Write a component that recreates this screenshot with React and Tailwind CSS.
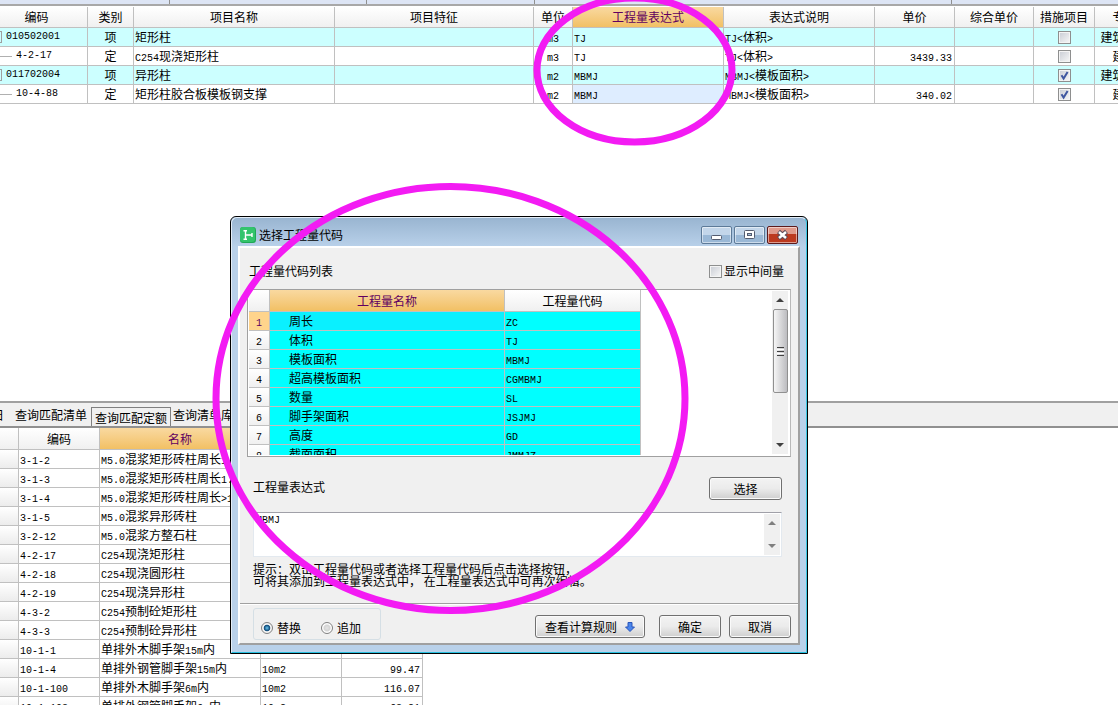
import { useState } from 'react';

const FONT = "font-['Noto_Sans_CJK_SC',sans-serif]";
const MONO = "font-['Liberation_Mono','Noto_Sans_CJK_SC',monospace]";

const HEAD = 'bg-linear-to-b from-white to-[#f0f0f0]';
const HEAD_ACTIVE = 'bg-linear-to-b from-[#f9d9a0] to-[#f2c063] text-[#600060]';
const CELL = 'h-[19px] border-r border-b border-[#c0c0c0] p-0 leading-4 whitespace-nowrap overflow-hidden';
const HCELL = 'border-r border-b border-[#c0c0c0] p-0 leading-4 font-normal whitespace-nowrap overflow-hidden';

const ITEM_COLS = [
  { title: '编码', width: 'w-[88px]' },
  { title: '类别', width: 'w-[46px]' },
  { title: '项目名称', width: 'w-[201px]' },
  { title: '项目特征', width: 'w-[199px]' },
  { title: '单位', width: 'w-[39px]' },
  { title: '工程量表达式', width: 'w-[151px]', active: true },
  { title: '表达式说明', width: 'w-[151px]' },
  { title: '单价', width: 'w-[80px]' },
  { title: '综合单价', width: 'w-[79px]' },
  { title: '措施项目', width: 'w-[61px]' },
  { title: '专业', width: 'w-[60px]' },
];

const ITEMS = [
  { code: '010502001', kind: '项', name: '矩形柱', unit: 'm3', expr: 'TJ', note: 'TJ<体积>', price: '', measure: false, major: '建筑工程' },
  { code: '4-2-17', kind: '定', name: 'C254现浇矩形柱', unit: 'm3', expr: 'TJ', note: 'TJ<体积>', price: '3439.33', measure: false, major: '建筑' },
  { code: '011702004', kind: '项', name: '异形柱', unit: 'm2', expr: 'MBMJ', note: 'MBMJ<模板面积>', price: '', measure: true, major: '建筑工程' },
  { code: '10-4-88', kind: '定', name: '矩形柱胶合板模板钢支撑', unit: 'm2', expr: 'MBMJ', note: 'MBMJ<模板面积>', price: '340.02', measure: true, major: '建筑', selected: true },
];

const QUOTAS = [
  ['3-1-2', 'M5.0混浆矩形砖柱周长1.2m内', '10m3', ''],
  ['3-1-3', 'M5.0混浆矩形砖柱周长1.8m内', '10m3', ''],
  ['3-1-4', 'M5.0混浆矩形砖柱周长>1.8m', '10m3', ''],
  ['3-1-5', 'M5.0混浆异形砖柱', '10m3', ''],
  ['3-2-12', 'M5.0混浆方整石柱', '10m3', ''],
  ['4-2-17', 'C254现浇矩形柱', '10m3', ''],
  ['4-2-18', 'C254现浇圆形柱', '10m3', ''],
  ['4-2-19', 'C254现浇异形柱', '10m3', ''],
  ['4-3-2', 'C254预制砼矩形柱', '10m3', ''],
  ['4-3-3', 'C254预制砼异形柱', '10m3', ''],
  ['10-1-1', '单排外木脚手架15m内', '', ''],
  ['10-1-4', '单排外钢管脚手架15m内', '10m2', '99.47'],
  ['10-1-100', '单排外木脚手架6m内', '10m2', '116.07'],
  ['10-1-103', '单排外钢管脚手架6m内', '10m2', '63.81'],
];

const CODES = [
  ['周长', 'ZC'],
  ['体积', 'TJ'],
  ['模板面积', 'MBMJ'],
  ['超高模板面积', 'CGMBMJ'],
  ['数量', 'SL'],
  ['脚手架面积', 'JSJMJ'],
  ['高度', 'GD'],
  ['截面面积', 'JMMJZ'],
];

// Latin runs go in the half-width mono face, two of them per Chinese glyph
function Mixed({ text }) {
  return text.split(/([\x20-\x7e]+)/).filter(Boolean).map((run, i) =>
    /^[\x20-\x7e]/.test(run)
      ? <span key={i} className={`${MONO} text-[10px] leading-none`}>{run}</span>
      : <span key={i}>{run}</span>
  );
}

function Check({ id, label, defaultChecked = false }) {
  return (
    <span className="inline-grid shrink-0">
      <input
        id={id}
        type="checkbox"
        aria-label={label}
        defaultChecked={defaultChecked}
        className="peer col-start-1 row-start-1 m-0 size-[13px] appearance-none border border-[#8e8f8f] bg-linear-to-br from-[#c8ccd4] to-[#f8f8f8] shadow-[inset_0_0_0_1px_#f4f4f4]"
      />
      <svg viewBox="0 0 13 13" className="pointer-events-none invisible col-start-1 row-start-1 size-[13px] peer-checked:visible">
        <path d="M3.5 6.2 L5.6 9.6 L9.6 3" fill="none" stroke="#3f57a0" strokeWidth="2" />
      </svg>
    </span>
  );
}

function ItemTable() {
  return (
    <table className="w-[1155px] table-fixed border-separate border-spacing-0">
      <thead>
        <tr>
          {ITEM_COLS.map((col, i) => (
            <th key={col.title} className={`${HCELL} h-[21px] ${col.width} ${i === 0 ? 'pr-[14px]' : ''} ${col.active ? HEAD_ACTIVE : HEAD}`}>
              {col.title}
            </th>
          ))}
        </tr>
      </thead>
      <tbody>
        {ITEMS.map((item) => {
          const parent = item.kind === '项';
          return (
            <tr key={item.code} className={parent ? 'bg-[#ccffff]' : 'bg-white'}>
              <td className={CELL}>
                <div className="flex items-center">
                  {parent
                    ? <span className="mr-1 h-3 w-[2px] border border-l-0 border-[#a0a0a0]" />
                    : <span className="mr-1 h-px w-3 bg-[#b0b0b0]" />}
                  <Mixed text={item.code} />
                </div>
              </td>
              <td className={`${CELL} text-center`}>{item.kind}</td>
              <td className={`${CELL} pl-px`}><Mixed text={item.name} /></td>
              <td className={CELL} />
              <td className={`${CELL} text-center`}><Mixed text={item.unit} /></td>
              <td className={`${CELL} pl-px ${item.selected ? 'bg-[#deedff]' : ''}`}><Mixed text={item.expr} /></td>
              <td className={`${CELL} pl-px`}><Mixed text={item.note} /></td>
              <td className={`${CELL} pr-[2px] text-right`}><Mixed text={item.price} /></td>
              <td className={CELL} />
              <td className={CELL}>
                <div className="flex justify-center">
                  <Check id={`measure-${item.code}`} label={`措施项目 ${item.code}`} defaultChecked={item.measure} />
                </div>
              </td>
              <td className={`${CELL} text-center`}>{item.major}</td>
            </tr>
          );
        })}
      </tbody>
    </table>
  );
}

function QuotaTable() {
  return (
    <table className="w-[423px] table-fixed border-separate border-spacing-0">
      <thead>
        <tr>
          <th className={`${HCELL} h-[22px] w-[19px] ${HEAD}`} />
          <th className={`${HCELL} w-[81px] ${HEAD}`}>编码</th>
          <th className={`${HCELL} w-[161px] ${HEAD_ACTIVE}`}>名称</th>
          <th className={`${HCELL} w-[81px] ${HEAD}`}>单位</th>
          <th className={`${HCELL} w-[81px] ${HEAD}`}>单价</th>
        </tr>
      </thead>
      <tbody>
        {QUOTAS.map(([code, name, unit, price]) => (
          <tr key={code}>
            <td className={`${CELL} bg-linear-to-b from-white to-[#ececec]`} />
            <td className={`${CELL} pl-px`}><Mixed text={code} /></td>
            <td className={`${CELL} pl-px`}><Mixed text={name} /></td>
            <td className={`${CELL} pl-px`}><Mixed text={unit} /></td>
            <td className={`${CELL} pr-[2px] text-right`}><Mixed text={price} /></td>
          </tr>
        ))}
      </tbody>
    </table>
  );
}

function QueryPanel() {
  return (
    <div className="h-[304px] shrink-0 overflow-hidden">
      <div className="flex h-[27px] items-start border-t-2 border-b-2 border-t-[#a0a0a0] border-b-[#909090] bg-[#f0f0f0] leading-4 whitespace-nowrap">
        <button className="mt-1 flex w-[4px] justify-end overflow-hidden">日</button>
        <button className="mt-1 ml-[11px]">查询匹配清单</button>
        <button className="mt-1 ml-1 h-[19px] border border-b-0 border-[#808080] px-[3px] pt-[2px] leading-4">查询匹配定额</button>
        <button className="mt-1 ml-[2px]">查询清单库</button>
      </div>
      <QuotaTable />
    </div>
  );
}

function Arrow({ up, className }) {
  return (
    <svg viewBox="0 0 8 4" className={`h-1 w-2 ${className}`}>
      <path d={up ? 'M0 4 L4 0 L8 4Z' : 'M0 0 L4 4 L8 0Z'} fill="currentColor" />
    </svg>
  );
}

function CodeList() {
  return (
    <div className="mx-[7px] mt-[10px] flex h-[168px] border border-[#a0a0a0] border-r-[#b8b8b8] bg-white pr-[2px] pb-px pl-px">
      <div className="flex-1 overflow-hidden">
        <table className="w-[392px] table-fixed border-separate border-spacing-0">
          <thead>
            <tr>
              <th className={`${HCELL} h-[22px] w-[21px] ${HEAD}`} />
              <th className={`${HCELL} w-[235px] ${HEAD_ACTIVE}`}>工程量名称</th>
              <th className={`${HCELL} w-[136px] ${HEAD}`}>工程量代码</th>
            </tr>
          </thead>
          <tbody>
            {CODES.map(([name, code], i) => (
              <tr key={code} className="bg-[#00ffff]">
                <td className={`${CELL} text-center ${i === 0 ? 'bg-[#ffd48c] text-[#600060]' : 'bg-linear-to-b from-white to-[#f0f0f0]'}`}>
                  <Mixed text={String(i + 1)} />
                </td>
                <td className={`${CELL} pl-[19px] ${i === 0 ? 'bg-[#0af0ff]' : ''}`}>{name}</td>
                <td className={`${CELL} pl-px`}><Mixed text={code} /></td>
              </tr>
            ))}
          </tbody>
        </table>
      </div>
      <div className="my-px flex w-4 flex-col items-center bg-[#f0f0f0] text-[#404040]">
        <Arrow up className="my-[7px]" />
        <div className="flex h-[84px] w-[15px] flex-col items-center justify-center gap-px rounded-xs border border-[#909090] bg-linear-to-r from-[#f6f6f6] to-[#bcbcc0]">
          <span className="h-px w-[7px] bg-[#404040]" />
          <span className="h-px w-[7px] bg-white" />
          <span className="h-px w-[7px] bg-[#404040]" />
          <span className="h-px w-[7px] bg-white" />
          <span className="h-px w-[7px] bg-[#404040]" />
        </div>
        <Arrow className="mt-auto mb-[7px]" />
      </div>
    </div>
  );
}

function PushButton({ className, children }) {
  return (
    <button className={`flex h-[23px] items-center justify-center gap-2 rounded-[3px] border border-[#707070] bg-linear-to-b from-[#f3f3f3] via-[#ebebeb] to-[#cfcfcf] leading-4 shadow-[inset_0_0_0_1px_#fafafa] ${className}`}>
      {children}
    </button>
  );
}

function CaptionButton({ label, className, children }) {
  return (
    <button aria-label={label} className={`h-[18px] w-[31px] rounded-[2px] border shadow-[inset_0_0_0_1px_rgba(255,255,255,0.5)] ${className}`}>
      <svg viewBox="0 0 29 16" className="h-4 w-[29px]">{children}</svg>
    </button>
  );
}

function TitleBar() {
  const blue = 'border-[#5d7a98] bg-linear-to-b from-[#c3d6ea] from-50% to-[#9ab8d6] to-50%';
  return (
    <div className="flex h-[28px] items-center pr-[2px] pl-[2px]">
      <svg viewBox="0 0 16 16" className="mt-[5px] size-4">
        <rect width="16" height="16" rx="3" fill="#1fa855" />
        <rect width="15" height="15" rx="3" fill="#33c46c" />
        <path d="M3.5 3.8 H7 M5.5 3.5 V12.5 M3.5 12.2 H7 M5.5 8 H11.5 M12 6 V10" fill="none" stroke="#fff" strokeWidth="1.4" />
      </svg>
      <h1 className="mt-[5px] ml-[3px] leading-4">选择工程量代码</h1>
      <div className="mt-[6px] ml-auto flex gap-[2px]">
        <CaptionButton label="最小化" className={blue}>
          <rect x="9.5" y="8.5" width="10" height="4" rx="1" fill="#fff" stroke="#545c70" />
        </CaptionButton>
        <CaptionButton label="最大化" className={blue}>
          <rect x="9.5" y="3.5" width="10" height="8" rx="1" fill="#fff" stroke="#545c70" />
          <rect x="12.5" y="6.5" width="4" height="2" fill="#a9c2dc" stroke="#545c70" />
        </CaptionButton>
        <CaptionButton label="关闭" className="border-[#5c1a1c] bg-linear-to-b from-[#e09a8c] from-45% to-[#bc3a20] to-45%">
          <path d="M10.5 4.5 L18.5 11.5 M18.5 4.5 L10.5 11.5" stroke="#5a4a58" strokeWidth="4.5" />
          <path d="M11 5 L18 11 M18 5 L11 11" stroke="#fff" strokeWidth="2.5" />
        </CaptionButton>
      </div>
    </div>
  );
}

function Radio({ label, value, mode, onChange }) {
  return (
    <label className="flex items-center gap-1 leading-4">
      <input
        type="radio"
        name="mode"
        value={value}
        checked={mode === value}
        onChange={() => onChange(value)}
        className="m-0 size-3 appearance-none rounded-full border border-[#808080] bg-[radial-gradient(circle,#e4e4e4_0,#d4d4d4_40%,#ffffff_60%)] checked:bg-[radial-gradient(circle,#6cc8f0_0,#0c4878_40%,#f4f4f4_52%)]"
      />
      {label}
    </label>
  );
}

function CodeDialog() {
  const [mode, setMode] = useState('replace');
  const [expr, setExpr] = useState('MBMJ');

  return (
    <section className="absolute top-[216px] left-[230px] w-[578px] rounded-t-md border border-black bg-linear-to-b from-[#98b4d0] to-[#b9d1ea] to-[30px]">
      <div className="rounded-t-md border border-t-[#e4eef8] border-b-[#28c0e0] border-l-[#e4eef8] border-r-[#3cc8e4] pr-[6px] pb-[7px] pl-[6px]">
        <TitleBar />
        <div className="h-[399px] border-2 border-t-white border-r-[#a0a0a0] border-b-[#a0a0a0] border-l-white bg-[#f0f0f0]">
          <div className="flex items-center pt-[15px] pr-[14px] pl-[9px] leading-4">
            <span>工程量代码列表</span>
            <label htmlFor="show-mid" className="ml-auto flex items-center gap-[2px]">
              <Check id="show-mid" label="显示中间量" />
              显示中间量
            </label>
          </div>

          <CodeList />

          <div className="mt-[20px] flex items-center justify-between pr-4 pl-[13px]">
            <label htmlFor="expr" className="pb-1 leading-4">工程量表达式</label>
            <PushButton className="w-[73px]">选择</PushButton>
          </div>

          <div className="mt-[12px] mr-4 ml-[13px] flex h-[45px] border border-[#e3e9ef] border-t-[#a0a0a8] bg-white">
            <textarea
              id="expr"
              value={expr}
              onChange={(e) => setExpr(e.target.value)}
              className={`${MONO} h-full flex-1 resize-none overflow-hidden bg-white px-[2px] text-[10px] leading-4 outline-none`}
            />
            <div className="my-px mr-px flex w-4 flex-col items-center justify-between bg-[#f0f0f0] py-[7px] text-[#808080]">
              <Arrow up className="" />
              <Arrow className="" />
            </div>
          </div>

          <p className="mt-[6px] ml-[13px] h-6 leading-3">
            提示：双击工程量代码或者选择工程量代码后点击选择按钮，<br />
            可将其添加到工程量表达式中， 在工程量表达式中可再次编辑。
          </p>

          <div className="mt-[16px] flex items-start border-t border-[#a0a0a0] pr-[7px] pl-[13px] shadow-[inset_0_1px_0_#ffffff]">
            <div className="mt-1 flex h-8 w-[128px] items-center gap-[20px] rounded-[3px] border border-[#d5dfe5] pt-[7px] pl-[7px]">
              <Radio label="替换" value="replace" mode={mode} onChange={setMode} />
              <Radio label="追加" value="append" mode={mode} onChange={setMode} />
            </div>
            <div className="mt-[11px] ml-auto flex">
              <PushButton className="mr-[14px] w-[110px]">
                查看计算规则
                <svg viewBox="0 0 10 10" className="size-[10px]">
                  <path d="M3 0.5 H7 V5 H9.5 L5 9.5 L0.5 5 H3Z" fill="#4a86ec" stroke="#2a55b8" />
                </svg>
              </PushButton>
              <PushButton className="mr-2 w-[62px]">确定</PushButton>
              <PushButton className="w-[62px]">取消</PushButton>
            </div>
          </div>
        </div>
      </div>
    </section>
  );
}

function Marks() {
  return (
    <svg className="pointer-events-none absolute top-0 left-0 h-[640px] w-[760px]" fill="none" stroke="#f31bf3" strokeWidth="7">
      <ellipse cx="634.5" cy="70" rx="97.5" ry="72" />
      <ellipse cx="450.5" cy="398.5" rx="234.5" ry="212" />
    </svg>
  );
}

export default function App() {
  return (
    <main className={`${FONT} relative flex h-screen flex-col overflow-hidden bg-white text-[12px] text-black`}>
      <div className="flex h-[6px] shrink-0 border-b-2 border-[#a8a8a8] bg-[#dde5f5]">
        <span className="w-[170px] border-r border-[#909090]" />
        <span className="w-[197px] border-r border-[#909090]" />
        <span className="w-[168px] border-r border-[#909090]" />
        <span className="w-[417px] border-r border-[#909090]" />
      </div>
      <div className="flex-1 overflow-hidden pt-px">
        <ItemTable />
      </div>
      <QueryPanel />
      <CodeDialog />
      <Marks />
    </main>
  );
}
